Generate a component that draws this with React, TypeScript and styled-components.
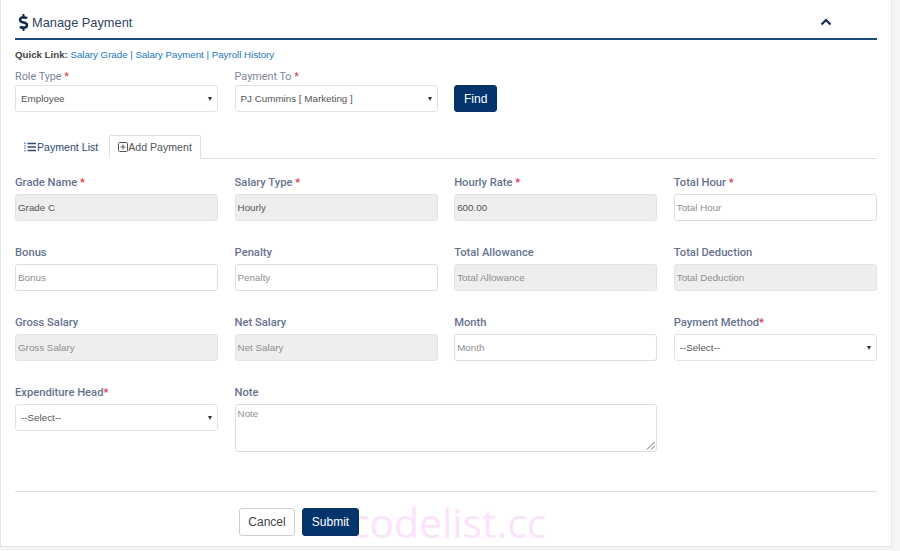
import React from 'react'
import styled, { createGlobalStyle } from 'styled-components'
import { FaDollarSign } from 'react-icons/fa'

const GlobalStyle = createGlobalStyle`
  html, body {
    margin: 0;
    padding: 0;
    background: #f5f5f5;
    font-family: "Liberation Sans", Arial, sans-serif;
  }
  * {
    box-sizing: border-box;
  }
`

const Panel = styled.div`
  position: relative;
  width: 892px;
  height: 547px;
  padding: 0 14px;
  background: #fff;
  border-left: 1px solid #e6e6e6;
  border-right: 1px solid #e6e6e6;
  border-bottom: 1px solid #e6e6e6;
`

const TitleBar = styled.div`
  display: flex;
  align-items: center;
  justify-content: space-between;
  height: 40px;
  padding: 6px 45px 0 0;
  border-bottom: 2px solid #1c4a77;
`

const Title = styled.h2`
  display: flex;
  align-items: center;
  margin: 0;
  font-size: 12.8px;
  font-weight: 400;
  color: #2b4560;
  svg {
    color: #10294d;
  }
`

const QuickLinks = styled.div`
  margin-top: 9px;
  height: 12px;
  font-size: 9.7px;
  line-height: 12px;
  color: #1a77b5;
  b {
    color: #444;
  }
`

const FinderRow = styled.div`
  display: grid;
  grid-template-columns: 203.25px 203.25px auto;
  column-gap: 16.33px;
  margin-top: 9px;
  align-items: end;
  justify-items: start;
`

const Field = styled.div`
  display: flex;
  flex-direction: column;
  width: 100%;
  min-width: 0;
`

const Label = styled.label<{ $strong?: boolean }>`
  height: 13px;
  font-family: Roboto, "Liberation Sans", sans-serif;
  line-height: 13px;
  font-size: ${({ $strong }) => ($strong ? '11.2px' : '10.8px')};
  margin-bottom: ${({ $strong }) => ($strong ? '5px' : '2px')};
  font-weight: ${({ $strong }) => ($strong ? 500 : 400)};
  color: ${({ $strong }) => ($strong ? '#66738f' : '#7d8499')};
`

const Req = styled.span`
  color: #e0324b;
`

const Control = styled.div<{ $disabled?: boolean; $tall?: boolean }>`
  display: flex;
  align-items: ${({ $tall }) => ($tall ? 'flex-start' : 'center')};
  position: relative;
  height: ${({ $tall }) => ($tall ? '48px' : '27px')};
  padding: ${({ $tall }) => ($tall ? '3px 2px' : '0 2px')};
  border: 1px solid ${({ $disabled }) => ($disabled ? '#e3e3e3' : '#dedede')};
  border-radius: 3px;
  background: ${({ $disabled }) => ($disabled ? '#eeeeee' : '#fff')};
  font-size: 9.8px;
`

const ControlText = styled.span<{ $filled?: boolean }>`
  color: ${({ $filled }) => ($filled ? '#555' : '#8f8f8f')};
`

const SelectBox = styled.div`
  display: flex;
  align-items: center;
  justify-content: space-between;
  height: 27px;
  padding: 0 5px;
  border: 1px solid #e3e3e3;
  border-radius: 3px;
  background: #fff;
  font-size: 9.8px;
  color: #555;
`

const Caret = styled.span`
  width: 0;
  height: 0;
  border-left: 2.5px solid transparent;
  border-right: 2.5px solid transparent;
  border-top: 4px solid #333;
`

const Resize = styled.svg`
  position: absolute;
  right: 1px;
  bottom: 1px;
`

const PrimaryButton = styled.button<{ $wide?: boolean }>`
  height: ${({ $wide }) => ($wide ? '28px' : '27px')};
  width: ${({ $wide }) => ($wide ? '57px' : '43px')};
  padding: 0;
  border: 1px solid #0b2f60;
  border-radius: 3px;
  background: #04346c;
  color: #fff;
  font-family: inherit;
  font-size: 12px;
`

const CancelButton = styled.button`
  height: 28px;
  width: 56px;
  padding: 0;
  border: 1px solid #cfcfcf;
  border-radius: 3px;
  background: #fff;
  color: #444;
  font-family: inherit;
  font-size: 12px;
`

const Tabs = styled.div`
  display: flex;
  align-items: flex-end;
  height: 24px;
  margin-top: 23px;
  border-bottom: 1px solid #e0e0e0;
`

const Tab = styled.div<{ $active?: boolean }>`
  display: flex;
  align-items: center;
  gap: ${({ $active }) => ($active ? '0' : '1px')};
  height: 24px;
  padding: ${({ $active }) => ($active ? '0 8px' : '0 10px 0 8px')};
  margin-bottom: -1px;
  font-size: 10.6px;
  color: ${({ $active }) => ($active ? '#555' : '#2b4a6f')};
  background: #fff;
  border: 1px solid ${({ $active }) => ($active ? '#e0e0e0' : 'transparent')};
  border-bottom-color: ${({ $active }) => ($active ? '#fff' : 'transparent')};
  border-radius: 2px 2px 0 0;
`

const FormGrid = styled.div`
  display: grid;
  grid-template-columns: repeat(4, 203.25px);
  column-gap: 16.33px;
  row-gap: 25px;
  margin-top: 17px;
`

const WideField = styled(Field)`
  grid-column: span 2;
`

const Rule = styled.hr`
  margin: 39px 0 0;
  border: 0;
  border-top: 1px solid #e0e0e0;
`

const Actions = styled.div`
  display: flex;
  gap: 7px;
  margin-top: 16px;
  padding-left: 224px;
`

const Watermark = styled.div`
  position: absolute;
  left: 349px;
  top: 500px;
  font-family: "Open Sans", sans-serif;
  font-size: 40.8px;
  line-height: 44px;
  color: #fbe4fb;
  pointer-events: none;
  z-index: 0;
`

const ActionButtonLayer = styled.div`
  position: relative;
  z-index: 1;
`

function TextField({ label, value, req, disabled, filled }: { label: string; value: string; req?: string; disabled?: boolean; filled?: boolean }) {
  return (
    <Field>
      <Label $strong>
        {label}
        {req && <Req>{req}</Req>}
      </Label>
      <Control $disabled={disabled}>
        <ControlText $filled={filled}>{value}</ControlText>
      </Control>
    </Field>
  )
}

function SelectField({ label, value, strong, req }: { label: string; value: string; strong?: boolean; req: string }) {
  return (
    <Field>
      <Label $strong={strong}>
        {label}
        <Req>{req}</Req>
      </Label>
      <SelectBox>
        {value}
        <Caret />
      </SelectBox>
    </Field>
  )
}

export default function App() {
  return (
    <>
      <GlobalStyle />
      <Panel>
        <TitleBar>
          <Title>
            <FaDollarSign size={17} />
            Manage Payment
          </Title>
          <svg width="12" height="8" viewBox="0 0 12 8" fill="none">
            <path d="M1.5 6.500 6 2l4.500 4.500" stroke="#10294d" strokeWidth="2.200" />
          </svg>
        </TitleBar>
        <QuickLinks>
          <b>Quick Link:</b> Salary Grade | Salary Payment | Payroll History
        </QuickLinks>
        <FinderRow>
          <SelectField label="Role Type " req="*" value="Employee" />
          <SelectField label="Payment To " req="*" value="PJ Cummins [ Marketing ]" />
          <PrimaryButton>Find</PrimaryButton>
        </FinderRow>
        <Tabs>
          <Tab>
            <svg width="12" height="10" viewBox="0 0 12 10" fill="none" stroke="#2b4a6f">
              <path d="M3.500 1.500H12M3.500 5H12M3.500 8.500H12" strokeWidth="1.300" />
              <path d="M1 .5v9" strokeWidth="1" strokeDasharray="1.500 1" />
            </svg>
            Payment List
          </Tab>
          <Tab $active>
            <svg width="10" height="10" viewBox="0 0 10 10" fill="none" stroke="#555">
              <rect x=".5" y=".5" width="9" height="9" rx="1" />
              <path d="M2.500 5h5M5 2.500v5" />
            </svg>
            Add Payment
          </Tab>
        </Tabs>
        <FormGrid>
          <TextField label="Grade Name " req="*" value="Grade C" disabled filled />
          <TextField label="Salary Type " req="*" value="Hourly" disabled filled />
          <TextField label="Hourly Rate " req="*" value="600.00" disabled filled />
          <TextField label="Total Hour " req="*" value="Total Hour" />
          <TextField label="Bonus" value="Bonus" />
          <TextField label="Penalty" value="Penalty" />
          <TextField label="Total Allowance" value="Total Allowance" disabled />
          <TextField label="Total Deduction" value="Total Deduction" disabled />
          <TextField label="Gross Salary" value="Gross Salary" disabled />
          <TextField label="Net Salary" value="Net Salary" disabled />
          <TextField label="Month" value="Month" />
          <SelectField label="Payment Method" req="*" value="--Select--" strong />
          <SelectField label="Expenditure Head" req="*" value="--Select--" strong />
          <WideField>
            <Label $strong>Note</Label>
            <Control $tall>
              <ControlText>Note</ControlText>
              <Resize width="9" height="9" viewBox="0 0 9 9" stroke="#666" fill="none">
                <path d="M1 8.500 8.500 1M5 8.500 8.500 5" />
              </Resize>
            </Control>
          </WideField>
        </FormGrid>
        <Rule />
        <Actions>
          <ActionButtonLayer>
            <CancelButton>Cancel</CancelButton>
          </ActionButtonLayer>
          <ActionButtonLayer>
            <PrimaryButton $wide>Submit</PrimaryButton>
          </ActionButtonLayer>
        </Actions>
        <Watermark>codelist.cc</Watermark>
      </Panel>
    </>
  )
}
